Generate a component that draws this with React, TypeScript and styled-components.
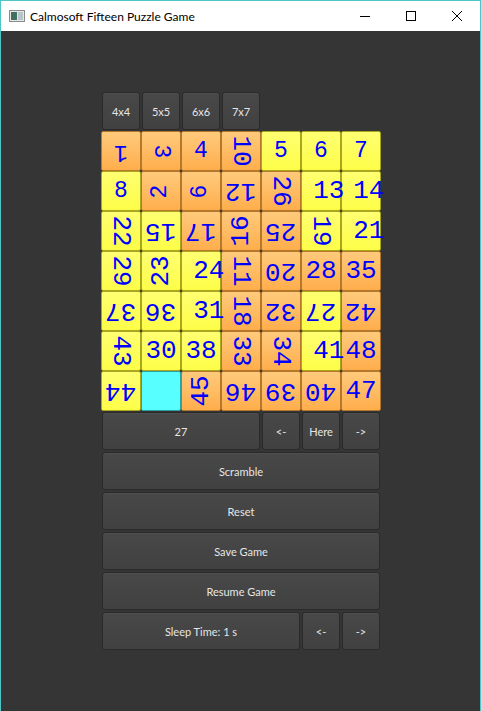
import styled, { createGlobalStyle, css } from 'styled-components';

const GlobalStyle = createGlobalStyle`
  html, body, #root {
    margin: 0;
    padding: 0;
    height: 100%;
  }
  body {
    background: #353535;
    font-family: Lato, "Liberation Sans", sans-serif;
  }
`

const Window = styled.div`
  display: flex;
  flex-direction: column;
  height: 100%;
  box-sizing: border-box;
  border: 1px solid #4ec6c8;
  border-bottom: none;
`

const TitleBar = styled.div`
  height: 30px;
  flex: none;
  display: flex;
  align-items: center;
  background: #ffffff;
  padding-left: 8px;
`

const TitleText = styled.span`
  margin-left: 5px;
  font-size: 12px;
  color: #000;
  flex: 1;
`

const WinControl = styled.div`
  width: 46px;
  height: 30px;
  display: flex;
  align-items: center;
  justify-content: center;
`

const Body = styled.div`
  flex: 1;
  display: flex;
  align-items: center;
  justify-content: center;
  padding-left: 1px;
  background: #353535;
`

const Board = styled.div`
  display: grid;
  grid-template-columns: repeat(7, 40px);
  grid-auto-rows: 40px;
`

const Spacer = styled.div<{ $span: number }>`
  grid-column: span ${p => p.$span};
`

type BtnProps = { $span?: number };
const Btn = styled.button<BtnProps>`
  grid-column: span ${p => p.$span ?? 1};
  margin: 1px;
  padding: 0;
  box-sizing: border-box;
  border: 1px solid #2a2a2a;
  border-radius: 3px;
  background: linear-gradient(#484848, #414141);
  color: #e6e6e6;
  font-family: Lato, "Liberation Sans", sans-serif;
  font-size: 11px;
  box-shadow: inset 0 1px 0 rgba(255,255,255,0.04);
`

type TileKind = 'o' | 'y' | 'c';
const tileColors = {
  o: css`
    background: linear-gradient(#ffca7c, #ffae4c);
    border-color: #b5772a;
  `,
  y: css`
    background: linear-gradient(#ffff72, #fdfd48);
    border-color: #a9a71e;
  `,
  c: css`
    background: #58ffff;
    border-color: #2c9f9f;
  `,
}

const Tile = styled.div<{ $kind: TileKind }>`
  box-sizing: border-box;
  border: 1px solid;
  border-radius: 2px;
  display: flex;
  align-items: center;
  justify-content: center;
  overflow: visible;
  ${p => tileColors[p.$kind]}
`

const Label = styled.span<{ $rot: number; $big: boolean }>`
  display: inline-block;
  white-space: pre;
  line-height: 1;
  color: #0000ff;
  font-family: "Liberation Mono", "DejaVu Sans Mono", monospace;
  font-size: ${p => (p.$big ? 26 : 23)}px;
  transform: rotate(${p => p.$rot}deg);
`

type TileDef = [string, TileKind, number];

const tiles: TileDef[][] = [
  [['1', 'o', 180], ['3', 'o', 90], ['4', 'o', 0], ['10', 'o', 90], ['5', 'y', 0], ['6', 'y', 0], ['7', 'y', 0]],
  [['8', 'y', 0], ['2', 'o', -90], ['6', 'o', -90], ['12', 'o', 180], ['26', 'o', 90], [' 13', 'y', 0], [' 14', 'y', 0]],
  [['22', 'y', 90], ['15', 'y', 180], ['17', 'o', 180], ['16', 'o', -90], ['25', 'o', 180], ['19', 'y', 90], [' 21', 'y', 0]],
  [['29', 'y', 90], ['23', 'y', -90], [' 24', 'y', 0], ['11', 'o', 90], ['20', 'o', 180], ['28', 'o', 0], ['35', 'o', 0]],
  [['37', 'y', 180], ['36', 'y', 180], [' 31', 'y', 0], ['18', 'o', 90], ['32', 'o', 180], ['27', 'y', 180], ['42', 'o', 180]],
  [['43', 'y', 90], ['30', 'y', 0], ['38', 'y', 0], ['33', 'o', 90], ['34', 'o', 90], [' 41', 'y', 0], ['48', 'o', 0]],
  [['44', 'y', 180], ['', 'c', 0], ['45', 'o', -90], ['46', 'o', 180], ['39', 'o', 180], ['40', 'o', 180], ['47', 'o', 0]],
];

function AppIcon() {
  return (
    <svg width="16" height="16" viewBox="0 0 16 16">
      <rect x="0.5" y="2.5" width="15" height="11" fill="#e8e8e8" stroke="#8a8a8a" />
      <rect x="2" y="4" width="6" height="8" fill="#3f6f62" />
      <rect x="9" y="4" width="5" height="8" fill="#b8c4c8" />
    </svg>
  );
}

export default function App() {
  return (
    <>
      <GlobalStyle />
      <Window>
        <TitleBar>
          <AppIcon />
          <TitleText>Calmosoft Fifteen Puzzle Game</TitleText>
          <WinControl>
            <svg width="10" height="10" viewBox="0 0 10 10">
              <line x1="0" y1="5.5" x2="10" y2="5.5" stroke="#000" strokeWidth="1" />
            </svg>
          </WinControl>
          <WinControl>
            <svg width="10" height="10" viewBox="0 0 10 10">
              <rect x="0.5" y="0.5" width="9" height="9" fill="none" stroke="#000" strokeWidth="1" />
            </svg>
          </WinControl>
          <WinControl>
            <svg width="10" height="10" viewBox="0 0 10 10">
              <path d="M0 0 L10 10 M10 0 L0 10" stroke="#000" strokeWidth="1" />
            </svg>
          </WinControl>
        </TitleBar>
        <Body>
          <Board>
            <Btn>4x4</Btn>
            <Btn>5x5</Btn>
            <Btn>6x6</Btn>
            <Btn>7x7</Btn>
            <Spacer $span={3} />
            {tiles.flat().map(([text, kind, rot], i) => (
              <Tile key={i} $kind={kind}>
                {text && <Label $rot={rot} $big={text.trim().length > 1}>{text}</Label>}
              </Tile>
            ))}
            <Btn $span={4}>27</Btn>
            <Btn>&lt;-</Btn>
            <Btn>Here</Btn>
            <Btn>-&gt;</Btn>
            <Btn $span={7}>Scramble</Btn>
            <Btn $span={7}>Reset</Btn>
            <Btn $span={7}>Save Game</Btn>
            <Btn $span={7}>Resume Game</Btn>
            <Btn $span={5}>Sleep Time: 1 s</Btn>
            <Btn>&lt;-</Btn>
            <Btn>-&gt;</Btn>
          </Board>
        </Body>
      </Window>
    </>
  );
}
